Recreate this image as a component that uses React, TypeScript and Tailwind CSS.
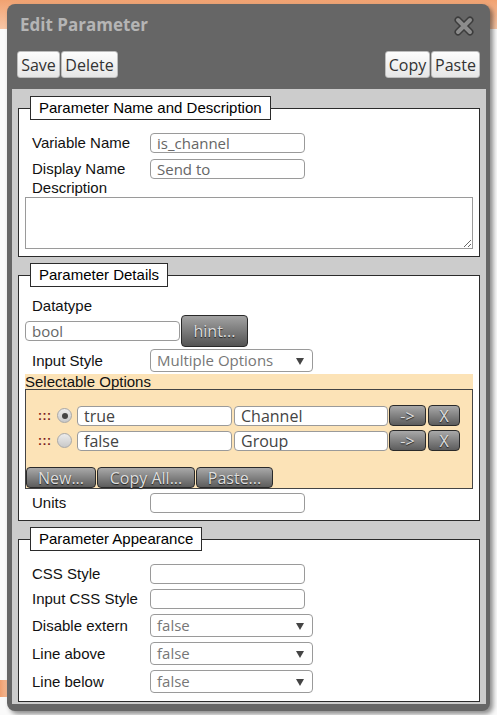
import type { ReactNode } from 'react';

const sans = "font-['Liberation_Sans',Arial,sans-serif]";
const open = "font-['Open_Sans','Noto_Sans',sans-serif]";

function Field({ value = '', w = 'w-[155px]' }: { value?: string; w?: string }) {
    return (
        <input
            readOnly
            defaultValue={value}
            className={`${w} h-[20px] shrink-0 rounded-[4px] border border-[#9a9a9a] bg-white px-[6px] text-[15px] leading-none text-[#666] outline-none ${open}`}
        />
    );
}

function FakeSelect({ value }: { value: string }) {
    return (
        <div className={`flex h-[23px] w-[163px] shrink-0 items-center justify-between rounded-[4px] border border-[#9a9a9a] bg-white pl-[6px] pr-[8px] text-[15px] text-[#777] ${open}`}>
            <span>{value}</span>
            <svg width="8" height="8" viewBox="0 0 8 8">
                <path d="M0 1 H8 L4 8 Z" fill="#444" />
            </svg>
        </div>
    );
}

function Row({ label, children }: { label: string; children: ReactNode }) {
    return (
        <div className="flex items-center">
            <span className={`ml-[7px] w-[118px] text-[15px] leading-[18px] text-[#111] ${sans}`}>{label}</span>
            {children}
        </div>
    );
}

function DarkButton({ children, w }: { children: ReactNode; w: string }) {
    return (
        <button
            className={`${w} h-[21px] shrink-0 rounded-[4px] border border-[#2a2a2a] bg-linear-to-b from-[#a9a9a9] to-[#5d5d5d] text-[16px] leading-none text-[#dedede] [text-shadow:0_1px_1px_#222] ${open}`}
        >
            {children}
        </button>
    );
}

function LightButton({ children, w }: { children: ReactNode; w: string }) {
    return (
        <button
            className={`${w} h-[27px] rounded-[3px] border border-[#bdbdbd] bg-linear-to-b from-[#fdfdfd] to-[#e6e6e6] text-[16px] leading-none text-[#333] ${open}`}
        >
            {children}
        </button>
    );
}

function Box({ title, children }: { title: string; children: ReactNode }) {
    return (
        <fieldset className="border border-[#2b2b2b] bg-white px-[6px]">
            <legend className={`ml-[5px] h-[24px] border border-[#2b2b2b] bg-white px-[8px] text-[15px] leading-[22px] text-black ${sans}`}>
                {title}
            </legend>
            {children}
        </fieldset>
    );
}

function OptionRow({ checked, value, display }: { checked: boolean; value: string; display: string }) {
    return (
        <div className="flex items-center">
            <span className={`ml-[12px] w-[19px] text-[12px] font-bold leading-none tracking-[0.5px] text-[#7a1c1c] ${sans}`}>:::</span>
            <span className="flex h-[15px] w-[15px] shrink-0 items-center justify-center rounded-full border border-[#a8a8a8] bg-linear-to-b from-[#ececec] to-[#c9c9c9]">
                {checked && <span className="h-[6px] w-[6px] rounded-full bg-[#444]" />}
            </span>
            <div className="ml-[5px] flex gap-[2px]">
                <input
                    readOnly
                    defaultValue={value}
                    className={`h-[20px] w-[155px] rounded-[4px] border border-[#9a9a9a] bg-white px-[6px] text-[16px] leading-none text-[#444] outline-none ${open}`}
                />
                <input
                    readOnly
                    defaultValue={display}
                    className={`h-[20px] w-[154px] rounded-[4px] border border-[#9a9a9a] bg-white px-[6px] text-[16px] leading-none text-[#444] outline-none ${open}`}
                />
            </div>
            <div className="ml-[1px] flex gap-[2px]">
                <DarkButton w="w-[37px]">-&gt;</DarkButton>
                <DarkButton w="w-[32px]">X</DarkButton>
            </div>
        </div>
    );
}

export default function App() {
    return (
        <div className="relative h-[715px] w-[497px] overflow-hidden bg-[#fafafa]">
            {/* page behind the dialog */}
            <div className="absolute left-0 top-0 h-[29px] w-full bg-linear-to-b from-[#f1a271] to-[#f7c6a6]" />
            <div className="absolute left-0 top-[680px] h-[17px] w-[10px] bg-linear-to-r from-[#ef9f6f] to-[#f6c4a3]" />

            <div className="relative ml-[7px] mt-[4px] flex h-[707px] w-[483px] flex-col rounded-[8px] bg-[#666] shadow-[3px_3px_5px_rgba(0,0,0,0.45)]">
                {/* Header */}
                <div className="flex h-[42px] items-center justify-between pl-[13px] pr-[16px]">
                    <span className={`text-[17px] font-bold text-[#b5b5b5] ${open}`}>Edit Parameter</span>
                    <svg width="20" height="20" viewBox="0 0 20 20" className="mt-[2px]">
                        <path d="M4 4 L16 16 M16 4 L4 16" stroke="#3c3c3c" strokeWidth="7" strokeLinecap="round" />
                        <path d="M4 4 L16 16 M16 4 L4 16" stroke="#8c8c8c" strokeWidth="4" strokeLinecap="round" />
                    </svg>
                </div>

                {/* Toolbar */}
                <div className="mt-[5px] flex justify-between px-[10px]">
                    <div className="flex gap-[1px]">
                        <LightButton w="w-[43px]">Save</LightButton>
                        <LightButton w="w-[57px]">Delete</LightButton>
                    </div>
                    <div className="flex gap-[1px]">
                        <LightButton w="w-[45px]">Copy</LightButton>
                        <LightButton w="w-[49px]">Paste</LightButton>
                    </div>
                </div>

                {/* Body */}
                <div className="mb-[7px] ml-[5px] mr-[4px] mt-[11px] flex flex-1 flex-col gap-[6px] bg-[#cccccc] px-[6px] pt-[7px]">
                    <Box title="Parameter Name and Description">
                        <div className="mt-[13px] flex flex-col gap-[6px]">
                            <Row label="Variable Name"><Field value="is_channel" /></Row>
                            <Row label="Display Name"><Field value="Send to" /></Row>
                        </div>
                        <div className={`ml-[7px] h-[18px] text-[15px] leading-[18px] text-[#111] ${sans}`}>Description</div>
                        <textarea readOnly className="mb-[7px] block h-[52px] w-[448px] border border-[#9a9a9a] bg-white outline-none" />
                    </Box>

                    <Box title="Parameter Details">
                        <div className={`ml-[7px] mt-[10px] h-[18px] text-[15px] leading-[18px] text-[#111] ${sans}`}>Datatype</div>
                        <div className="flex h-[32px] items-center">
                            <Field value="bool" />
                            <button className={`ml-[1px] h-[32px] w-[67px] rounded-[4px] border border-[#2a2a2a] bg-linear-to-b from-[#a3a3a3] to-[#555] text-[16px] leading-none text-[#dcdcdc] [text-shadow:0_1px_1px_#222] ${open}`}>
                                hint...
                            </button>
                        </div>
                        <div className="mt-[2px]">
                            <Row label="Input Style"><FakeSelect value="Multiple Options" /></Row>
                        </div>
                        <div className="mt-[2px] bg-[#fce3b7]">
                            <div className={`h-[15px] text-[15px] leading-[15px] text-[#111] ${sans}`}>Selectable Options</div>
                            <div className="flex h-[100px] flex-col border border-[#444] pt-[15px]">
                                <div className="flex flex-col gap-[4px]">
                                    <OptionRow checked value="true" display="Channel" />
                                    <OptionRow checked={false} value="false" display="Group" />
                                </div>
                                <div className="mt-auto flex gap-[1px]">
                                    <DarkButton w="w-[70px]">New...</DarkButton>
                                    <DarkButton w="w-[98px]">Copy All...</DarkButton>
                                    <DarkButton w="w-[77px]">Paste...</DarkButton>
                                </div>
                            </div>
                        </div>
                        <div className="mb-[7px] mt-[4px]">
                            <Row label="Units"><Field /></Row>
                        </div>
                    </Box>

                    <Box title="Parameter Appearance">
                        <div className="mb-[8px] mt-[13px] flex flex-col gap-[5px]">
                            <Row label="CSS Style"><Field /></Row>
                            <Row label="Input CSS Style"><Field /></Row>
                            <Row label="Disable extern"><FakeSelect value="false" /></Row>
                            <Row label="Line above"><FakeSelect value="false" /></Row>
                            <Row label="Line below"><FakeSelect value="false" /></Row>
                        </div>
                    </Box>
                </div>
            </div>
        </div>
    );
}
